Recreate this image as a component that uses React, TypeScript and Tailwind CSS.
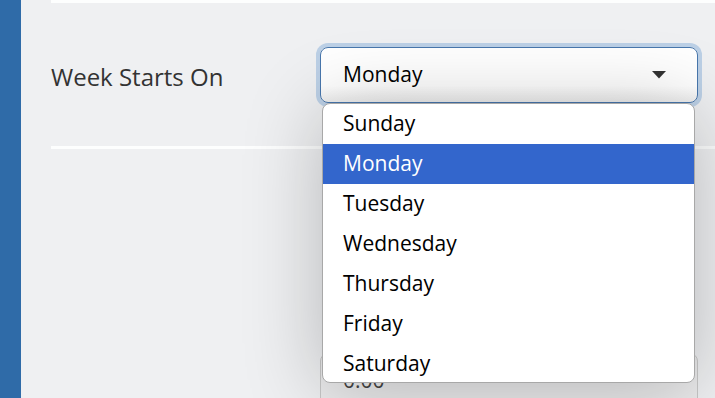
import { useState } from "react";

const days = ["Sunday", "Monday", "Tuesday", "Wednesday", "Thursday", "Friday", "Saturday"];

export default function App() {
  const [selected, setSelected] = useState("Monday");

  return (
    <div
      className="flex h-[398px] w-[715px] overflow-hidden bg-[#eff0f2] text-[#222]"
      style={{ fontFamily: '"Open Sans", "Noto Sans", sans-serif' }}
    >
      <aside className="w-[21px] shrink-0 bg-[#2f6ba8]" />

      <main className="relative flex-1 pl-[30px]">
        <div className="h-[3px] bg-white/90" />

        <div className="flex h-[143px] items-center">
          <label className="w-[269px] pt-[4px] text-[24px] text-[#333]">Week Starts On</label>
          <div className="relative">
            <button className="flex h-[56px] w-[378px] items-center justify-between rounded-[8px] border-[1.5px] border-[#4877ad] bg-gradient-to-b from-white from-70% to-[#efefef] pl-[22px] pr-[31px] text-[21px] text-black ring-4 ring-[#bcd0e6]">
              {selected}
              <svg width="14" height="8" viewBox="0 0 14 8">
                <path d="M0 0 L14 0 L7 7.5 Z" fill="#333" />
              </svg>
            </button>

            <ul className="absolute left-[2px] top-[56px] z-10 h-[280px] w-[373px] overflow-hidden rounded-[8px] border border-[#a8a8a8] bg-white shadow-[0_6px_80px_rgba(0,0,0,0.24)]">
              {days.map((day) => (
                <li
                  key={day}
                  onClick={() => setSelected(day)}
                  className={`flex h-[40px] items-center pl-[20px] text-[21px] ${
                    day === selected ? "bg-[#3366cc] text-white" : "text-black"
                  }`}
                >
                  {day}
                </li>
              ))}
            </ul>
          </div>
        </div>

        <div className="h-[3px] bg-white/90" />

        <div className="mt-[204px] ml-[269px] flex h-[56px] w-[378px] items-center rounded-[8px] border border-[#c8c8c8] bg-[#ebebec] pl-[22px] text-[21px] text-[#444]">
          0.00
        </div>
      </main>
    </div>
  );
}
